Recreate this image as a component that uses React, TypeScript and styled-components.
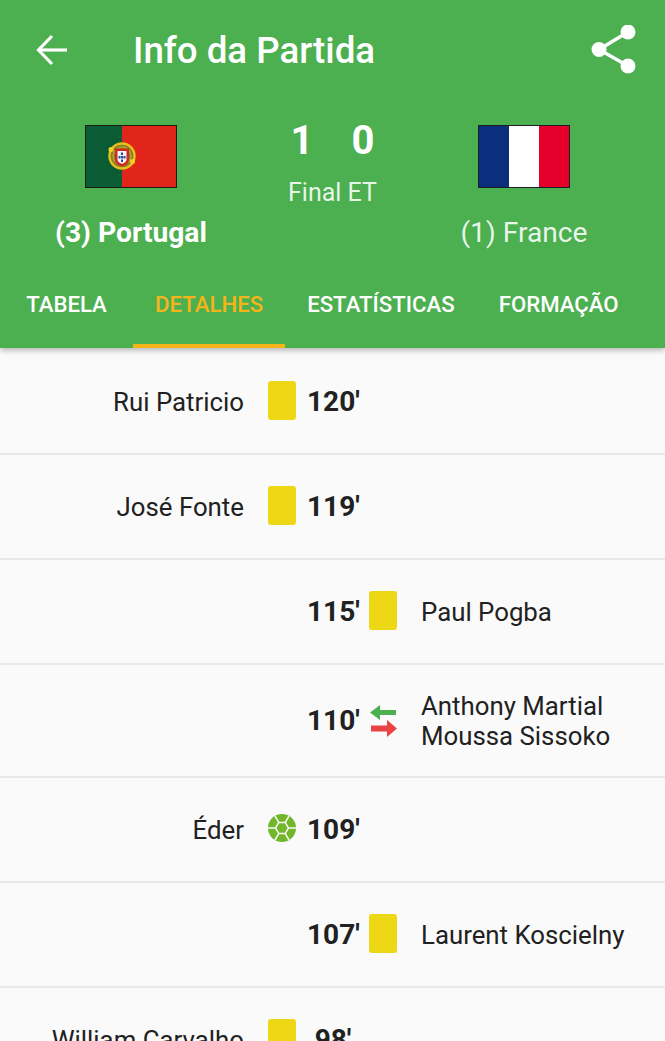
import React from 'react';
import styled, { createGlobalStyle } from 'styled-components';

const GlobalStyle = createGlobalStyle`
  html, body { margin: 0; padding: 0; background: #fafafa; }
  body { font-family: Roboto, "Liberation Sans", sans-serif; overflow: hidden; }
`;

const Screen = styled.div`
  width: 665px;
  height: 1041px;
  overflow: hidden;
  background: #fafafa;
`;

const Header = styled.header`
  position: relative;
  z-index: 1;
  height: 348px;
  background: #4caf50;
  color: #fff;
  box-shadow: 0 2px 6px rgba(0, 0, 0, 0.3);
  display: flex;
  flex-direction: column;
`;

const Toolbar = styled.div`
  display: flex;
  align-items: center;
  height: 100px;
  padding: 0 28px 0 36px;
`;

const IconButton = styled.button`
  display: flex;
  padding: 0;
  border: 0;
  background: transparent;
  color: inherit;
`;

const Title = styled.h1`
  flex: 1;
  margin: 0 0 0 65px;
  padding-top: 2px;
  font-size: 36.7px;
  font-weight: 500;
  line-height: 40px;
`;

const Match = styled.div`
  display: grid;
  grid-template-columns: 262px 141px 262px;
  height: 172px;
`;

const Team = styled.div<{ $away?: boolean }>`
  display: flex;
  flex-direction: column;
  align-items: center;
  padding-top: 25px;
  padding-right: ${p => (p.$away ? '20px' : '0')};
`;

const TeamName = styled.div<{ $winner?: boolean }>`
  margin-top: 27px;
  font-size: 28.2px;
  line-height: 36px;
  white-space: nowrap;
  font-weight: ${p => (p.$winner ? 700 : 400)};
  color: ${p => (p.$winner ? '#fff' : 'rgba(255,255,255,0.88)')};
`;

const Score = styled.div`
  display: flex;
  flex-direction: column;
  align-items: center;
`;

const Goals = styled.div`
  display: flex;
  justify-content: center;
  gap: 38px;
  margin-top: 18px;
  font-size: 40px;
  line-height: 46px;
  font-weight: 700;
`;

const Status = styled.div`
  margin-top: 14px;
  font-size: 25px;
  line-height: 30px;
  white-space: nowrap;
  color: rgba(255, 255, 255, 0.88);
`;

const Tabs = styled.nav`
  display: flex;
  height: 76px;
`;

const Tab = styled.div<{ $active?: boolean }>`
  display: flex;
  align-items: center;
  justify-content: center;
  box-sizing: border-box;
  min-width: 133px;
  padding: 0 22px 8px;
  font-size: 22.2px;
  font-weight: 500;
  white-space: nowrap;
  color: ${p => (p.$active ? '#f4b41a' : '#fff')};
  border-bottom: 4px solid ${p => (p.$active ? '#f4b41a' : 'transparent')};
`;

const EventList = styled.main`
  padding-top: 1.5px;
`;

const Row = styled.div`
  display: flex;
  align-items: center;
  box-sizing: border-box;
  min-height: 105px;
  padding: 23px 0 25px;
  border-bottom: 2px solid #e9e9e9;
`;

const Name = styled.div<{ $side: 'left' | 'right' }>`
  box-sizing: border-box;
  padding-top: 3px;
  font-size: 25.8px;
  line-height: 30px;
  color: #212121;
  white-space: nowrap;
  ${p =>
    p.$side === 'left'
      ? 'width: 244px; text-align: right;'
      : 'flex: 1; padding-left: 24px;'}
`;

const IconSlot = styled.div<{ $side: 'left' | 'right' }>`
  width: 28px;
  flex-shrink: 0;
  display: flex;
  justify-content: center;
  margin-left: ${p => (p.$side === 'left' ? '24px' : '10px')};
`;

const Minute = styled.div`
  width: 52px;
  margin-left: 11px;
  padding-top: 3px;
  flex-shrink: 0;
  font-size: 28px;
  line-height: 34px;
  font-weight: 700;
  color: #212121;
  text-align: center;
`;

const YellowCard = styled.div`
  width: 28px;
  height: 39px;
  border-radius: 3px;
  background: #eed815;
`;

const PortugalFlag = () => (
  <svg width="92" height="63" viewBox="0 0 92 63">
    <rect width="92" height="63" fill="#1c1c14" />
    <rect x="1" y="1" width="36" height="61" fill="#0a5c34" />
    <rect x="37" y="1" width="54" height="61" fill="#e1251b" />
    <circle cx="37" cy="31" r="12.500" fill="#8c7a24" stroke="#e6c11c" strokeWidth="2.400" />
    <circle cx="37" cy="31" r="9" fill="none" stroke="#a9b02c" strokeWidth="1.400" />
    <path d="M30 23.500h14v11c0 4-3.500 6-7 7-3.500-1-7-3-7-7z" fill="#d3281f" />
    <path d="M32.500 26h9v8.500c0 2.200-2.300 3.600-4.500 4.300-2.200-.7-4.500-2.100-4.500-4.300z" fill="#f4f4f4" />
    <rect x="36" y="27.500" width="2" height="2.500" fill="#1f4fa0" />
    <rect x="33.500" y="31" width="2" height="2.500" fill="#1f4fa0" />
    <rect x="36" y="31" width="2" height="2.500" fill="#1f4fa0" />
    <rect x="38.500" y="31" width="2" height="2.500" fill="#1f4fa0" />
    <rect x="36" y="34.500" width="2" height="2.500" fill="#1f4fa0" />
    <circle cx="26" cy="24.500" r="2.500" fill="#efd41e" />
    <circle cx="47.500" cy="36.500" r="2.500" fill="#efd41e" />
  </svg>
);

const FranceFlag = () => (
  <svg width="92" height="63" viewBox="0 0 92 63">
    <rect width="92" height="63" fill="#1c1c24" />
    <rect x="1" y="1" width="30" height="61" fill="#0b2f7c" />
    <rect x="31" y="1" width="30" height="61" fill="#fff" />
    <rect x="61" y="1" width="30" height="61" fill="#e4002b" />
  </svg>
);

const BackIcon = () => (
  <svg width="32" height="32" viewBox="0 0 32 32" fill="none" stroke="#fff" strokeWidth="3.200">
    <path d="M31 16H3" />
    <path d="M16 2L2.500 16 16 30" />
  </svg>
);

const ShareIcon = () => (
  <svg width="46" height="50" viewBox="0 0 46 50" fill="#fff">
    <circle cx="37" cy="7" r="7.500" />
    <circle cx="8" cy="24.500" r="7.500" />
    <circle cx="37" cy="41" r="7.500" />
    <path d="M37 7L8 24.500 37 41" fill="none" stroke="#fff" strokeWidth="3.400" />
  </svg>
);

const SubIcon = () => (
  <svg width="28" height="35" viewBox="0 0 28 35">
    <path d="M1 10.500L11 3v5h16v5H11v5z" fill="#4caf50" />
    <path d="M28 26.500L18 18v5.500H2v6h16V35z" fill="#e94343" />
  </svg>
);

const BallIcon = () => (
  <svg width="28" height="28" viewBox="0 0 28 28">
    <circle cx="14" cy="14" r="14" fill="#72b62c" />
    <path
      d="M10.750 8.400h6.500l3.250 5.600-3.250 5.600h-6.500L7.500 14zM10.750 8.400L7 2M17.250 8.400L21 2M20.500 14H28M17.250 19.600L21 26M10.750 19.600L7 26M7.500 14H0"
      fill="none"
      stroke="#fafafa"
      strokeWidth="1.500"
    />
  </svg>
);

type Side = 'left' | 'right';
type Kind = 'card' | 'sub' | 'goal';

interface MatchEvent {
  minute: string;
  side: Side;
  kind: Kind;
  names: string[];
}

const events: MatchEvent[] = [
  { minute: "120'", side: 'left', kind: 'card', names: ['Rui Patricio'] },
  { minute: "119'", side: 'left', kind: 'card', names: ['José Fonte'] },
  { minute: "115'", side: 'right', kind: 'card', names: ['Paul Pogba'] },
  { minute: "110'", side: 'right', kind: 'sub', names: ['Anthony Martial', 'Moussa Sissoko'] },
  { minute: "109'", side: 'left', kind: 'goal', names: ['Éder'] },
  { minute: "107'", side: 'right', kind: 'card', names: ['Laurent Koscielny'] },
  { minute: "98'", side: 'left', kind: 'card', names: ['William Carvalho'] },
];

const tabs = ['TABELA', 'DETALHES', 'ESTATÍSTICAS', 'FORMAÇÃO'];

const eventIcon = (kind: Kind) => {
  switch (kind) {
    case 'sub': return <SubIcon />;
    case 'goal': return <BallIcon />;
    default: return <YellowCard />;
  }
};

const EventRow = ({ event }: { event: MatchEvent }) => {
  const names = event.names.map(n => <div key={n}>{n}</div>);
  return (
    <Row>
      <Name $side="left">{event.side === 'left' && names}</Name>
      <IconSlot $side="left">{event.side === 'left' && eventIcon(event.kind)}</IconSlot>
      <Minute>{event.minute}</Minute>
      <IconSlot $side="right">{event.side === 'right' && eventIcon(event.kind)}</IconSlot>
      <Name $side="right">{event.side === 'right' && names}</Name>
    </Row>
  );
};

export default function App() {
  return (
    <Screen>
      <GlobalStyle />
      <Header>
        <Toolbar>
          <IconButton><BackIcon /></IconButton>
          <Title>Info da Partida</Title>
          <IconButton><ShareIcon /></IconButton>
        </Toolbar>
        <Match>
          <Team>
            <PortugalFlag />
            <TeamName $winner>(3) Portugal</TeamName>
          </Team>
          <Score>
            <Goals><span>1</span><span>0</span></Goals>
            <Status>Final ET</Status>
          </Score>
          <Team $away>
            <FranceFlag />
            <TeamName>(1) France</TeamName>
          </Team>
        </Match>
        <Tabs>
          {tabs.map((t, i) => <Tab key={t} $active={i === 1}>{t}</Tab>)}
        </Tabs>
      </Header>
      <EventList>
        {events.map(e => <EventRow key={e.minute} event={e} />)}
      </EventList>
    </Screen>
  );
}
